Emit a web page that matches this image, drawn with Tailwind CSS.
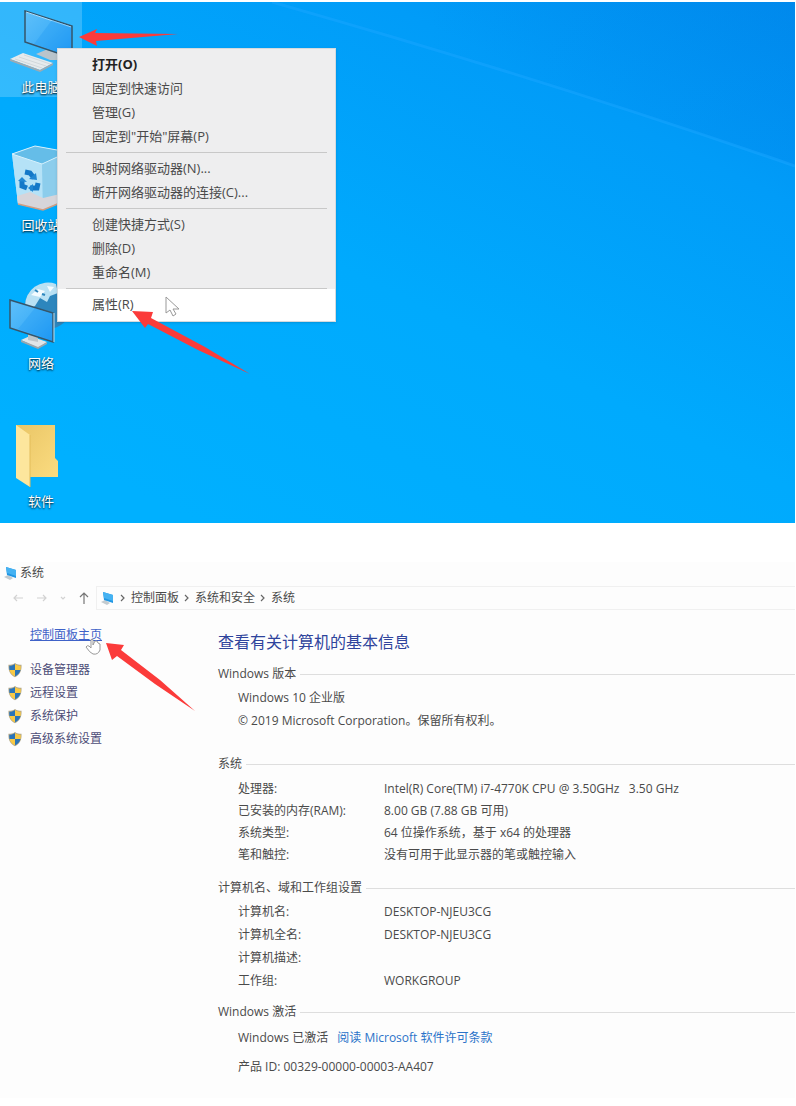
<!DOCTYPE html>
<html lang="zh-CN">
<head>
  <meta charset="UTF-8">
  <title>系统</title>
  <script src="https://cdn.jsdelivr.net/npm/@tailwindcss/browser@4"></script>
</head>
<body class="relative min-h-screen bg-white font-['Open_Sans','Noto_Sans_CJK_SC',sans-serif] text-xs text-[#4a4a4a]">

  <!-- Desktop -->
  <section class="relative mt-0.5 mr-px overflow-hidden bg-[#00a8fe]">
    <svg class="absolute inset-0 h-full w-full" viewBox="0 0 795 521" preserveAspectRatio="none" aria-hidden="true">
      <defs>
        <linearGradient id="sky" x1="0.25" y1="1" x2="1" y2="0">
          <stop offset="0" stop-color="#00b0ff"/>
          <stop offset="0.4" stop-color="#00aafd"/>
          <stop offset="0.75" stop-color="#019cf8"/>
          <stop offset="1" stop-color="#008cee"/>
        </linearGradient>
        <linearGradient id="shade" x1="0" y1="0" x2="1" y2="0">
          <stop offset="0.3" stop-color="#0080e8" stop-opacity="0"/>
          <stop offset="1" stop-color="#0080e8" stop-opacity="0.25"/>
        </linearGradient>
      </defs>
      <rect width="795" height="521" fill="url(#sky)"/>
      <path d="M272 0Q540 76 795 164V0Z" fill="url(#shade)"/>
      <path d="M272 0Q540 76 795 164" fill="none" stroke="#1aa5ff" stroke-width="3" opacity="0.5"/>
    </svg>

    <div class="relative flex w-[82px] flex-col gap-[43px] pb-3 text-[13px] leading-5 text-white [text-shadow:0_1px_2px_#000]">
      <a href="#" class="flex flex-col items-center bg-white/20">
        <svg class="h-[75px] w-full" viewBox="0 0 82 75" aria-hidden="true">
          <defs>
            <linearGradient id="screen" x1="0" y1="0" x2="1" y2="1">
              <stop offset="0" stop-color="#5fc0fa"/><stop offset="0.5" stop-color="#43b1f8"/><stop offset="1" stop-color="#1e98f4"/>
            </linearGradient>
          </defs>
          <path d="M36 52L48 47L62 51V58L50 58Z" fill="#b9c4cb"/>
          <path d="M25 9L72 24V56L25 40Z" fill="url(#screen)" stroke="#36556a" stroke-width="1.5"/>
          <path d="M26 10L71 25" stroke="#a9dcfb" stroke-width="1"/>
          <path d="M52 18L71 25V54L34 42Z" fill="#1a94f2" opacity="0.3"/>
          <path d="M10 57L23 51L53 61L40 68Z" fill="#e6eaec"/>
          <path d="M10 57L40 68L53 61V63L40 70L10 59Z" fill="#9daab2"/>
          <path d="M15 57L42 66M19 55L46 64M24 53L50 62" stroke="#ccd3d7" stroke-width="0.8"/>
        </svg>
        <span>此电脑</span>
      </a>
      <a href="#" class="flex flex-col items-center">
        <svg class="h-[75px] w-full" viewBox="0 0 82 75" aria-hidden="true">
          <path d="M12 14L35 6L68 12V60L43 70L18 64Z" fill="#a9ddf6"/>
          <path d="M12 14L35 6L68 12L42 24Z" fill="#65bde8"/>
          <path d="M12 14L42 24L43 70L18 64Z" fill="#b5e2f7"/>
          <path d="M42 24L68 12L64 61L43 70Z" fill="#8ccdec"/>
          <path d="M17 56L30 52L43 58L60 54V62L43 70L18 64Z" fill="#d7d5da"/>
          <path d="M18 64L43 70L60 63" fill="none" stroke="#d29d82" stroke-width="1.5"/>
          <path d="M12 14L35 6L68 12M12 14L42 24L68 12" fill="none" stroke="#d3f0fd" stroke-width="1"/>
          <g fill="none" stroke="#1478c8" stroke-width="5">
            <path d="M25 32L30 33L34 38"/>
            <path d="M38 43L37 48L30 48"/>
            <path d="M27 48L22 46L22 40"/>
          </g>
          <path d="M36 33L37 40L29 39ZM33 44V52L28 48ZM18 41L22 37L27 42Z" fill="#2187d3"/>
        </svg>
        <span>回收站</span>
      </a>
      <a href="#" class="flex flex-col items-center">
        <svg class="h-[75px] w-full" viewBox="0 0 82 75" aria-hidden="true">
          <circle cx="48" cy="28" r="23" fill="#2d86bd"/>
          <path d="M25 28A23 23 0 0 1 56 6L58 15L50 18L47 24L40 20L35 28L28 33Z" fill="#b9e1f4"/>
          <path d="M31 17L38 11L45 13L40 19ZM47 8L54 9L50 14Z" fill="#f3fbff"/>
          <path d="M35 12L38 14M42 16L45 17" stroke="#2d86bd" stroke-width="2"/>
          <path d="M21 62L30 58L47 64L38 70Z" fill="#dfe5e8"/>
          <path d="M21 62L38 69L47 64V66L38 71L21 64Z" fill="#9aa6ad"/>
          <path d="M28 56L38 59V64L28 62Z" fill="#bdc6cb"/>
          <path d="M10 22L53 35V64L10 50Z" fill="url(#screen)" stroke="#36556a" stroke-width="1.5"/>
          <path d="M35 30L52 36V62L18 51Z" fill="#1a94f2" opacity="0.3"/>
          <path d="M54 35V64" stroke="#c4dce8" stroke-width="1"/>
        </svg>
        <span>网络</span>
      </a>
      <a href="#" class="flex flex-col items-center">
        <svg class="h-[75px] w-full" viewBox="0 0 82 75" aria-hidden="true">
          <defs>
            <linearGradient id="folder" x1="0" y1="0" x2="1" y2="1">
              <stop offset="0" stop-color="#e9c566"/><stop offset="1" stop-color="#fbdc80"/>
            </linearGradient>
          </defs>
          <path d="M16 9H55V42L58 45V61H24Z" fill="url(#folder)"/>
          <path d="M16 9L30 19V71L16 62Z" fill="#fde69d"/>
          <path d="M30 19V71" stroke="#e3bd5b" stroke-width="1"/>
        </svg>
        <span>软件</span>
      </a>
    </div>

    <!-- Context menu -->
    <div class="absolute top-[46px] left-[57px] flex w-[279px] flex-col border border-[#d6dadd] bg-[#eeeeef] pt-1 text-[13px] shadow-sm">
      <button class="h-6 pl-[34px] text-left font-bold text-[#222]">打开(O)</button>
      <button class="h-6 pl-[34px] text-left">固定到快速访问</button>
      <button class="h-6 pl-[34px] text-left">管理(G)</button>
      <button class="h-6 pl-[34px] text-left">固定到"开始"屏幕(P)</button>
      <hr class="mx-2 mt-[3px] mb-1 border-[#c8c8c8]">
      <button class="h-6 pl-[34px] text-left">映射网络驱动器(N)...</button>
      <button class="h-6 pl-[34px] text-left">断开网络驱动器的连接(C)...</button>
      <hr class="mx-2 mt-[3px] mb-1 border-[#c8c8c8]">
      <button class="h-6 pl-[34px] text-left">创建快捷方式(S)</button>
      <button class="h-6 pl-[34px] text-left">删除(D)</button>
      <button class="h-6 pl-[34px] text-left">重命名(M)</button>
      <hr class="mx-2 mt-[3px] border-[#c8c8c8]">
      <button class="h-8 bg-white pl-[34px] text-left">属性(R)</button>
    </div>

    <!-- Mouse pointer and arrows -->
    <svg class="absolute top-0 left-0 h-[400px] w-[300px]" viewBox="0 2 300 400" aria-hidden="true">
      <path d="M166 297V313L170 310L173 316L176 314L173 309L179 309Z" fill="#fff" stroke="#999" stroke-width="1"/>
      <path d="M79 37L97 29L95 33L178 34L96 41L97 46Z" fill="#fb3b3a"/>
      <path d="M132 311L153 312L151 318L205 347L250 374L198 350L148 324L145 328Z" fill="#fb3b3a"/>
    </svg>
  </section>

  <!-- System window -->
  <section class="mt-[39px] mr-px bg-[#fdfdfd] pb-5">
    <svg class="hidden" aria-hidden="true">
      <symbol id="pc" viewBox="0 0 14 14">
        <path d="M0 11L4 9L9 12L6 14Z" fill="#c3cbd0"/>
        <path d="M2 1L12 4V12L3 9Z" fill="#2196e3"/>
        <path d="M2 1L12 4V10L3 7Z" fill="#45b2f2"/>
      </symbol>
      <symbol id="shield" viewBox="0 0 15 16">
        <path d="M7.500 0.500C5.500 2 3 2.500 0.500 2.500C0.200 9 2 13 7.500 15.800C13 13 14.800 9 14.500 2.500C12 2.500 9.500 2 7.500 0.500Z" fill="#b3a98a"/>
        <path d="M7.500 1.500V8H1.600C1.300 6.500 1.300 5 1.400 3.500C4 3.400 6 2.800 7.500 1.500Z" fill="#2a74b8"/>
        <path d="M7.500 1.500V8H13.400C13.700 6.500 13.700 5 13.600 3.500C11 3.400 9 2.800 7.500 1.500Z" fill="#f8c945"/>
        <path d="M1.600 8H7.500V14.800C4.500 13.300 2.300 11 1.600 8Z" fill="#f8c945"/>
        <path d="M13.400 8H7.500V14.800C10.500 13.300 12.700 11 13.400 8Z" fill="#2a74b8"/>
      </symbol>
    </svg>
    <header class="flex h-[22px] items-center gap-0.5 pl-1">
      <svg class="size-3.5"><use href="#pc"/></svg>
      <h1>系统</h1>
    </header>
    <nav class="flex h-7 items-center">
      <div class="flex w-24 items-center gap-3 pl-3">
        <button aria-label="后退"><svg class="h-3 w-3" viewBox="0 0 12 12" fill="none" stroke="#d2d2d2" stroke-width="1.2"><path d="M11 6H2M5 3L2 6L5 9"/></svg></button>
        <button aria-label="前进"><svg class="h-3 w-3" viewBox="0 0 12 12" fill="none" stroke="#d2d2d2" stroke-width="1.2"><path d="M1 6H10M7 3L10 6L7 9"/></svg></button>
        <button aria-label="最近位置"><svg class="h-3 w-1.5" viewBox="0 0 6 12" fill="none" stroke="#d2d2d2" stroke-width="1.2"><path d="M1 5L3 7L5 5"/></svg></button>
        <button aria-label="上移"><svg class="h-3 w-3" viewBox="0 0 12 12" fill="none" stroke="#777" stroke-width="1.2"><path d="M6 12V1M2 5L6 1L10 5"/></svg></button>
      </div>
      <div class="flex h-6 flex-1 items-center gap-[5px] border border-r-0 border-[#f0f0f0] pl-1">
        <svg class="size-3.5"><use href="#pc"/></svg>
        <svg class="h-2 w-1.5" viewBox="0 0 6 8" fill="none" stroke="#666" stroke-width="1.2"><path d="M1 1L4 4L1 7"/></svg>
        <a href="#">控制面板</a>
        <svg class="h-2 w-1.5" viewBox="0 0 6 8" fill="none" stroke="#666" stroke-width="1.2"><path d="M1 1L4 4L1 7"/></svg>
        <a href="#">系统和安全</a>
        <svg class="h-2 w-1.5" viewBox="0 0 6 8" fill="none" stroke="#666" stroke-width="1.2"><path d="M1 1L4 4L1 7"/></svg>
        <a href="#">系统</a>
      </div>
    </nav>

    <div class="relative flex">
      <aside class="flex w-[218px] shrink-0 flex-col pt-[11px] text-[#4d4d78]">
        <a href="#" class="mb-[11px] pl-[30px] leading-6 text-[#3f62c8] underline">控制面板主页</a>
        <a href="#" class="flex h-[23px] items-center gap-2 pl-2"><svg class="h-4 w-3.5"><use href="#shield"/></svg>设备管理器</a>
        <a href="#" class="flex h-[23px] items-center gap-2 pl-2"><svg class="h-4 w-3.5"><use href="#shield"/></svg>远程设置</a>
        <a href="#" class="flex h-[23px] items-center gap-2 pl-2"><svg class="h-4 w-3.5"><use href="#shield"/></svg>系统保护</a>
        <a href="#" class="flex h-[23px] items-center gap-2 pl-2"><svg class="h-4 w-3.5"><use href="#shield"/></svg>高级系统设置</a>
      </aside>

      <main class="flex-1 pt-[18px]">
        <h2 class="text-base leading-6 text-[#2f449c]">查看有关计算机的基本信息</h2>

        <h3 class="mt-2 flex h-6 items-center gap-1 after:h-px after:flex-1 after:bg-[#dedede]">Windows 版本</h3>
        <div class="pl-5 leading-[23px]">
          <p>Windows 10 企业版</p>
          <p>© 2019 Microsoft Corporation。保留所有权利。</p>
        </div>

        <h3 class="mt-5 flex h-6 items-center gap-1 after:h-px after:flex-1 after:bg-[#dedede]">系统</h3>
        <table class="mt-0.5 ml-5 text-left leading-[22px]">
          <tr><th class="w-[146px] font-normal">处理器:</th><td class="whitespace-pre">Intel(R) Core(TM) i7-4770K CPU @ 3.50GHz   3.50 GHz</td></tr>
          <tr><th class="font-normal">已安装的内存(RAM):</th><td>8.00 GB (7.88 GB 可用)</td></tr>
          <tr><th class="font-normal">系统类型:</th><td>64 位操作系统，基于 x64 的处理器</td></tr>
          <tr><th class="font-normal">笔和触控:</th><td>没有可用于此显示器的笔或触控输入</td></tr>
        </table>

        <h3 class="mt-2.5 flex h-6 items-center gap-1 after:h-px after:flex-1 after:bg-[#dedede]">计算机名、域和工作组设置</h3>
        <table class="ml-5 text-left leading-[23px]">
          <tr><th class="w-[146px] font-normal">计算机名:</th><td>DESKTOP-NJEU3CG</td></tr>
          <tr><th class="font-normal">计算机全名:</th><td>DESKTOP-NJEU3CG</td></tr>
          <tr><th class="font-normal">计算机描述:</th><td></td></tr>
          <tr><th class="font-normal">工作组:</th><td>WORKGROUP</td></tr>
        </table>

        <h3 class="mt-2 flex h-6 items-center gap-1 after:h-px after:flex-1 after:bg-[#dedede]">Windows 激活</h3>
        <div class="mt-0.5 flex flex-col gap-1.5 pl-5 leading-[23px]">
          <p>Windows 已激活 <a href="#" class="ml-1.5 text-[#2b73c9]">阅读 Microsoft 软件许可条款</a></p>
          <p>产品 ID: 00329-00000-00003-AA407</p>
        </div>
      </main>

      <!-- Hand pointer and arrow over the sidebar -->
      <svg class="pointer-events-none absolute top-0 left-0 h-[110px] w-[210px]" viewBox="0 612 210 110" aria-hidden="true">
        <path d="M91 648V640Q92 638 93 640V645L95 641H97L98 643L100 644V650Q98 655 93 654Q90 653 86 647Q87 645 89 646Z" fill="#fff" stroke="#999" stroke-width="1"/>
        <path d="M106 643L124 645L121 650L160 680L195 711L155 684L117 656L112 660Z" fill="#fb3b3a"/>
      </svg>
    </div>
  </section>

</body>
</html>
